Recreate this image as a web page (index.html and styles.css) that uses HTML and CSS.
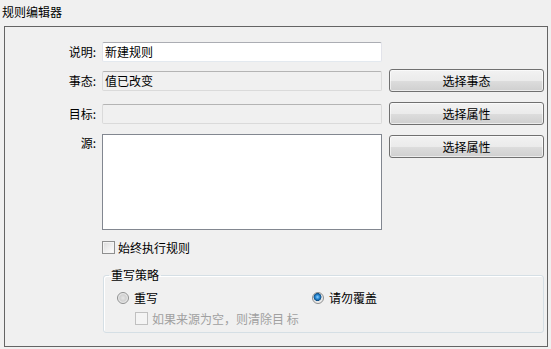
FILE: index.html
```html
<!DOCTYPE html>
<html lang="zh">
<head>
<meta charset="utf-8">
<link rel="stylesheet" href="styles.css">
</head>
<body>
<div class="title">规则编辑器</div>
<div class="frame">
  <div class="row r1">
    <div class="label">说明:</div>
    <div class="field">新建规则</div>
  </div>
  <div class="row r2">
    <div class="label">事态:</div>
    <div class="field disabled">值已改变</div>
    <div class="btn">选择事态</div>
  </div>
  <div class="row r3">
    <div class="label">目标:</div>
    <div class="field disabled"></div>
    <div class="btn">选择属性</div>
  </div>
  <div class="row r4">
    <div class="label top">源:</div>
    <div class="area"></div>
    <div class="btn btop">选择属性</div>
  </div>
  <div class="check-row">
    <span class="box"></span><span>始终执行规则</span>
  </div>
  <fieldset class="group">
    <legend>重写策略</legend>
    <div class="radios">
      <div class="opt"><span class="radio"></span><span>重写</span></div>
      <div class="opt"><span class="radio on"></span><span>请勿覆盖</span></div>
    </div>
    <div class="sub">
      <span class="box off"></span><span class="dis">如果来源为空，则清除目 标</span>
    </div>
  </fieldset>
</div>
</body>
</html>
```

FILE: styles.css
```css
html, body {
  margin: 0;
  padding: 0;
  background: #f0f0f0;
}
body {
  width: 551px;
  height: 349px;
  overflow: hidden;
  font-family: "Noto Sans CJK SC", "Noto Sans", sans-serif;
  font-size: 12px;
  color: #000;
}
.title {
  height: 26px;
  line-height: 24px;
  padding-left: 2px;
}
.frame {
  box-sizing: border-box;
  height: 321px;
  margin: 0 3px 2px 4px;
  border: 1px solid #646464;
  padding-top: 15px;
}
.row {
  display: flex;
  align-items: center;
}
.r1 { height: 20px; }
.r2 { height: 23px; margin-top: 7px; }
.r3 { height: 23px; margin-top: 10px; }
.r4 { align-items: flex-start; margin-top: 9px; }
.label {
  width: 91px;
  margin-right: 6px;
  text-align: right;
  line-height: 20px;
}
.label.top { line-height: 18px; }
.field {
  box-sizing: border-box;
  width: 280px;
  height: 20px;
  line-height: 18px;
  padding-left: 2px;
  background: #fff;
  border: 1px solid #e2e3ea;
  border-top-color: #abadb3;
  border-bottom-color: #e3e9ef;
  border-radius: 2px;
}
.field.disabled {
  background: #f0f0f0;
  border-color: #dadada;
  border-top-color: #b4b4b4;
}
.area {
  box-sizing: border-box;
  width: 280px;
  height: 96px;
  background: #fff;
  border: 1px solid #828790;
}
.btn {
  box-sizing: border-box;
  width: 155px;
  height: 23px;
  margin-left: 7px;
  line-height: 21px;
  text-align: center;
  border: 1px solid #707070;
  border-radius: 3px;
  background: linear-gradient(#f2f2f2 0%, #ebebeb 50%, #dddddd 51%, #cfcfcf 100%);
  box-shadow: inset 0 0 0 1px rgba(255,255,255,0.6);
}
.btn.btop { margin-top: 1px; }
.check-row {
  display: flex;
  align-items: center;
  height: 14px;
  margin-top: 10px;
  padding-left: 97px;
}
.box {
  box-sizing: border-box;
  width: 13px;
  height: 13px;
  margin-right: 3px;
  border: 1px solid #8e8f8f;
  background: linear-gradient(135deg, #dcdcdc, #ffffff);
  box-shadow: inset 0 0 0 1px #f4f4f4;
}
.box.off {
  border-color: #c0c0c0;
  background: #f4f4f4;
  margin-right: 4px;
}
.group {
  margin: 14px 3px 0 98px;
  padding: 0 0 7px 0;
  border: 1px solid #d5dfe5;
  border-radius: 3px;
  box-shadow: inset 1px 1px 0 #fff;
}
.group legend {
  margin-left: 5px;
  padding: 0 2px;
  line-height: 14px;
}
.radios {
  display: grid;
  grid-template-columns: 195px auto;
  margin-top: 7px;
  padding-left: 13px;
  height: 14px;
}
.opt {
  display: flex;
  align-items: center;
}
.radio {
  box-sizing: border-box;
  width: 12px;
  height: 12px;
  margin-right: 5px;
  border-radius: 50%;
  border: 1px solid #8e8f8f;
  background: radial-gradient(circle at 50% 50%, #e6e6e6 0, #d0d0d0 45%, #f4f4f4 75%, #fff 100%);
}
.radio.on {
  background: radial-gradient(circle at 45% 40%, #8fd0ff 0, #2a8ad4 25%, #0d4e86 45%, #e2e2e2 52%, #ffffff 100%);
}
.sub {
  display: flex;
  align-items: center;
  height: 14px;
  margin-top: 8px;
  padding-left: 31px;
}
.dis { color: #a0a0a0; }
```
